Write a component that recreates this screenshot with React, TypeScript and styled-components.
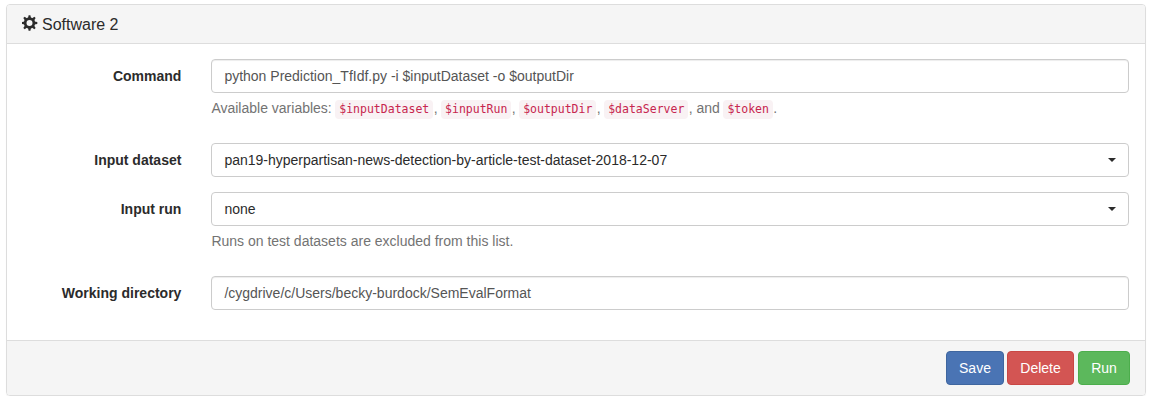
import React from "react";
import styled, { createGlobalStyle } from "styled-components";

const GlobalStyle = createGlobalStyle`
  *, *::before, *::after { box-sizing: border-box; }
  body {
    margin: 0;
    background: #fff;
    color: #2b2b2b;
    font-family: "Liberation Sans", Arial, sans-serif;
    font-size: 14px;
    line-height: 20px;
  }
`;

const Panel = styled.section`
  margin: 4px 6px 0;
  height: 392px;
  border: 1px solid #ddd;
  border-radius: 4px;
  box-shadow: 0 1px 1px rgba(0, 0, 0, 0.05);
  display: flex;
  flex-direction: column;
  overflow: hidden;
`;

const PanelHeader = styled.header`
  height: 39px;
  padding: 1px 15px 0;
  display: flex;
  align-items: center;
  gap: 4px;
  background: #f5f5f5;
  border-bottom: 1px solid #ddd;
`;

const GearIcon = styled.svg`
  width: 16px;
  height: 16px;
  margin-top: -3px;
  fill: #2b2b2b;
`;

const Title = styled.h3`
  margin: 0;
  font-size: 16px;
  font-weight: 400;
  line-height: 18px;
`;

const PanelBody = styled.form`
  flex: 1;
  padding: 15px 16px 0 15px;
`;

const FormGroup = styled.div`
  display: grid;
  grid-template-columns: 159.4px 1fr;
  column-gap: 29.6px;
  margin-bottom: 15px;
`;

const Label = styled.label`
  padding-top: 7px;
  text-align: right;
  font-weight: 700;
`;

const TextInput = styled.input`
  display: block;
  width: 100%;
  height: 34px;
  padding: 6px 12px 6px 12.4px;
  font: inherit;
  color: #555;
  background: #fff;
  border: 1px solid #ccc;
  border-radius: 4px;
  box-shadow: inset 0 1px 1px rgba(0, 0, 0, 0.075);
  outline: none;
`;

const SelectButton = styled.button`
  display: flex;
  align-items: center;
  justify-content: space-between;
  width: 100%;
  height: 34px;
  padding: 6px 12px 6px 12.4px;
  font: inherit;
  color: #2b2b2b;
  background: #fff;
  border: 1px solid #ccc;
  border-radius: 4px;
`;

const Caret = styled.span`
  border-top: 4px solid #2b2b2b;
  border-left: 4px solid transparent;
  border-right: 4px solid transparent;
`;

const HelpText = styled.p`
  margin: 5px 0 10px;
  padding-left: 0.4px;
  height: 20px;
  color: #737373;
  white-space: nowrap;
`;

const Code = styled.code`
  display: inline-block;
  height: 19px;
  margin: 0 0.4px 0 -0.4px;
  padding: 2px 4px;
  font-family: "DejaVu Sans Mono", monospace;
  font-size: 11.5px;
  line-height: 15px;
  color: #c7254e;
  background: #f9f2f4;
  border-radius: 4px;
`;

const PanelFooter = styled.footer`
  height: 55px;
  padding: 10px 15px;
  display: flex;
  justify-content: flex-end;
  background: #f5f5f5;
  border-top: 1px solid #ddd;
`;

const tones = {
  primary: ["#4a74b4", "#3f669f"],
  danger: ["#d35553", "#c94744"],
  success: ["#5cb85c", "#4cae4c"],
};

const Button = styled.button<{ $tone: keyof typeof tones; $width: number; $gap: number }>`
  width: ${(p) => p.$width}px;
  height: 34px;
  margin-left: ${(p) => p.$gap}px;
  padding: 0;
  font: inherit;
  color: #fff;
  background: ${(p) => tones[p.$tone][0]};
  border: 1px solid ${(p) => tones[p.$tone][1]};
  border-radius: 4px;
`;

const toothAngles = [0, 45, 90, 135, 180, 225, 270, 315];

function Gear() {
  return (
    <GearIcon viewBox="0 0 16 16" aria-hidden="true">
      <path
        fillRule="evenodd"
        d="M7.5 2.3a5.7 5.7 0 1 0 0 11.4a5.7 5.7 0 1 0 0-11.4zM7.5 5a3 3 0 1 1 0 6a3 3 0 1 1 0-6z"
      />
      {toothAngles.map((angle) => (
        <path key={angle} d="M6 3.2L6.6.2h1.8L9 3.2z" transform={`rotate(${angle} 7.5 8)`} />
      ))}
    </GearIcon>
  );
}

export default function App() {
  return (
    <>
      <GlobalStyle />
      <Panel>
        <PanelHeader>
          <Gear />
          <Title>Software 2</Title>
        </PanelHeader>
        <PanelBody>
          <FormGroup>
            <Label htmlFor="command">Command</Label>
            <div>
              <TextInput
                id="command"
                spellCheck={false}
                defaultValue="python Prediction_TfIdf.py -i $inputDataset -o $outputDir"
              />
              <HelpText>
                Available variables: <Code>$inputDataset</Code>, <Code>$inputRun</Code>,{" "}
                <Code>$outputDir</Code>, <Code>$dataServer</Code>, and <Code>$token</Code>.
              </HelpText>
            </div>
          </FormGroup>
          <FormGroup>
            <Label htmlFor="dataset">Input dataset</Label>
            <SelectButton id="dataset" type="button">
              pan19-hyperpartisan-news-detection-by-article-test-dataset-2018-12-07
              <Caret />
            </SelectButton>
          </FormGroup>
          <FormGroup>
            <Label htmlFor="run">Input run</Label>
            <div>
              <SelectButton id="run" type="button">
                none
                <Caret />
              </SelectButton>
              <HelpText>Runs on test datasets are excluded from this list.</HelpText>
            </div>
          </FormGroup>
          <FormGroup>
            <Label htmlFor="directory">Working directory</Label>
            <TextInput
              id="directory"
              spellCheck={false}
              defaultValue="/cygdrive/c/Users/becky-burdock/SemEvalFormat"
            />
          </FormGroup>
        </PanelBody>
        <PanelFooter>
          <Button type="button" $tone="primary" $width={58} $gap={0}>Save</Button>
          <Button type="button" $tone="danger" $width={67} $gap={3}>Delete</Button>
          <Button type="button" $tone="success" $width={52} $gap={4}>Run</Button>
        </PanelFooter>
      </Panel>
    </>
  );
}
